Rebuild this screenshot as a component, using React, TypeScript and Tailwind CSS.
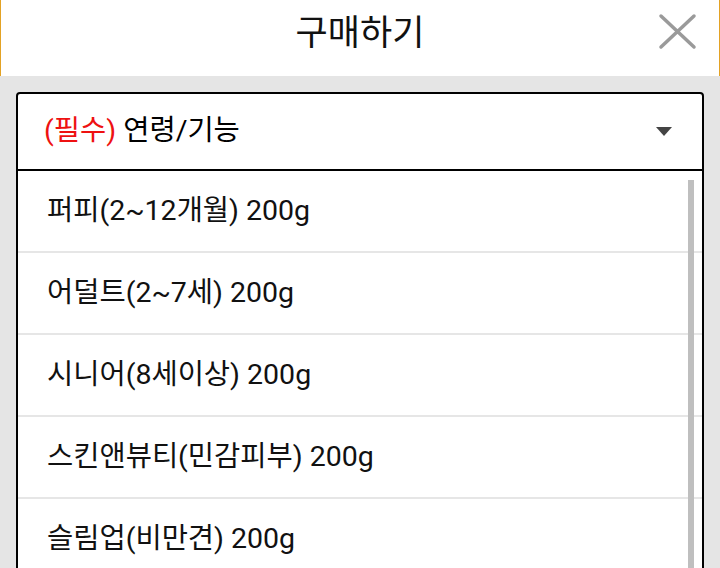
const options = [
    '퍼피(2~12개월) 200g',
    '어덜트(2~7세) 200g',
    '시니어(8세이상) 200g',
    '스킨앤뷰티(민감피부) 200g',
    '슬림업(비만견) 200g',
];

export default function App() {
    return (
        <div
            className="w-[720px] h-[568px] overflow-hidden bg-[#e5e5e5] text-black"
            style={{ fontFamily: 'Roboto, "Noto Sans CJK KR", sans-serif' }}
        >
            <header className="relative h-[76px] bg-white border-x border-[#e3a224] flex items-center justify-center pb-[10px]">
                <h1 className="text-[35px] leading-none text-[#111]">구매하기</h1>
                <button className="absolute left-[657px] top-[13px]">
                    <svg width="39" height="37" viewBox="0 0 39 37">
                        <path d="M3 3 L36 34 M36 3 L3 34" stroke="#9a9a9a" strokeWidth="3.5" strokeLinecap="round" />
                    </svg>
                </button>
            </header>

            <div className="px-4 pt-4">
                <div className="relative bg-white border-2 border-black rounded-t-[4px]">
                    <div className="h-[77px] border-b-2 border-black flex items-center justify-between pl-[26px] pr-[30px]">
                        <p className="text-[28.5px] leading-none">
                            <span className="text-[#ee1111]">(필수)</span> 연령/기능
                        </p>
                        <svg width="16" height="9" viewBox="0 0 16 9">
                            <path d="M0 0 H16 L8 9 Z" fill="#444" />
                        </svg>
                    </div>
                    <ul>
                        {options.map(opt => (
                            <li
                                key={opt}
                                className="h-[82px] border-b-2 border-[#e6e6e6] flex items-center pl-[29px] text-[28.5px] leading-none text-[#111]"
                            >
                                {opt}
                            </li>
                        ))}
                    </ul>
                    <div className="absolute right-[8px] top-[86px] w-[6px] h-[500px] bg-[#bfbfbf]" />
                </div>
            </div>
        </div>
    );
}
